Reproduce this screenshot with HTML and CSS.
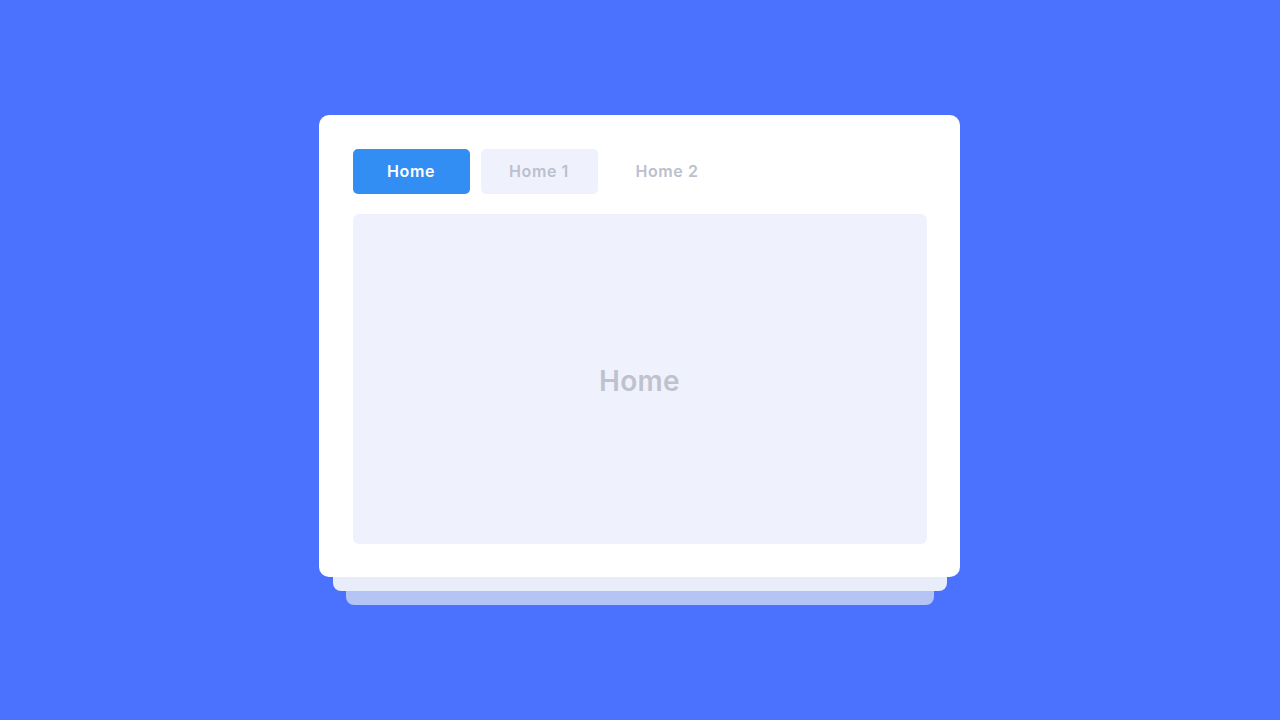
FILE: index.html
```html
<!DOCTYPE html>
<html>
<head>
<meta charset="utf-8">
<link rel="stylesheet" href="styles.css">
</head>
<body>
<div class="stack">
  <div class="card">
    <div class="tabs">
      <div class="tab active">Home</div>
      <div class="tab hover">Home 1</div>
      <div class="tab">Home 2</div>
    </div>
    <div class="panel">Home</div>
  </div>
  <div class="layer layer2"></div>
  <div class="layer layer3"></div>
</div>
</body>
</html>
```
FILE: styles.css
```css
html, body {
  margin: 0;
  padding: 0;
}
body {
  width: 1280px;
  height: 720px;
  background: #4a72ff;
  display: flex;
  align-items: center;
  justify-content: center;
  font-family: "Inter", "Open Sans", sans-serif;
}
.stack {
  display: flex;
  flex-direction: column;
  align-items: center;
  margin-right: 2px;
}
.card {
  width: 641px;
  height: 462px;
  box-sizing: border-box;
  background: #ffffff;
  border-radius: 10px;
  padding: 34px 33px 33px 34px;
  display: flex;
  flex-direction: column;
  gap: 20px;
  position: relative;
  z-index: 2;
}
.tabs {
  display: flex;
  gap: 11px;
}
.tab {
  width: 117px;
  height: 45px;
  box-sizing: border-box;
  padding-bottom: 1px;
  border-radius: 5px;
  display: flex;
  align-items: center;
  justify-content: center;
  font-size: 16px;
  font-weight: 600;
  color: #bcbfcc;
  letter-spacing: 0.6px;
}
.tab.active {
  background: #338ef4;
  color: #ffffff;
}
.tab.hover {
  background: #eff2fd;
}
.panel {
  flex: 1;
  box-sizing: border-box;
  padding-top: 3px;
  background: #eff2fd;
  border-radius: 6px;
  display: flex;
  align-items: center;
  justify-content: center;
  font-size: 28px;
  font-weight: 600;
  color: #bfc2ce;
  letter-spacing: 0.3px;
}
.layer {
  height: 14px;
  border-radius: 0 0 8px 8px;
  margin-left: 1px;
}
.layer2 {
  width: 614px;
  background: #e9edf9;
  z-index: 1;
}
.layer3 {
  width: 588px;
  background: #b3c4f5;
}
```
